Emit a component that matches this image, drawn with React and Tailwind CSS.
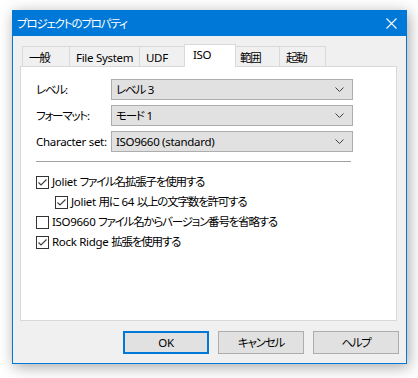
import React from 'react';

const font = { fontFamily: '"Noto Sans", "Noto Sans CJK JP", sans-serif' };

// Japanese runs get tighter tracking to approach Meiryo UI widths
function T({ children }) {
  const parts = String(children).split(/([\u3000-\u30ff\u4e00-\u9fff\uff00-\uffef]+)/);
  return (
    <>
      {parts.map((p, i) =>
        i % 2 === 1 ? (
          <span key={i} className="tracking-[-1.2px]">{p}</span>
        ) : (
          <span key={i}>{p}</span>
        )
      )}
    </>
  );
}

function Chevron() {
  return (
    <svg width="9" height="5" viewBox="0 0 9 5" className="shrink-0">
      <polyline points="0.5,0.5 4.5,4.5 8.5,0.5" fill="none" stroke="#404040" strokeWidth="1" />
    </svg>
  );
}

function Combo({ label, value }) {
  return (
    <div className="flex items-center h-[21px]">
      <div className="w-[75px] shrink-0"><T>{label}</T></div>
      <div className="w-[242px] h-[21px] flex items-center justify-between border border-[#adadad] bg-[#e1e1e1] pl-[4px] pr-[8px]">
        <span><T>{value}</T></span>
        <Chevron />
      </div>
    </div>
  );
}

function Check({ checked, label, indent }) {
  return (
    <div className={`flex items-center h-[20px] ${indent ? 'pl-[19px]' : ''}`}>
      <div className="w-[13px] h-[13px] border border-[#333333] bg-white flex items-center justify-center shrink-0">
        {checked && (
          <svg width="11" height="11" viewBox="0 0 11 11">
            <polyline points="1.5,5.5 4,8 9.5,2.5" fill="none" stroke="#404040" strokeWidth="1.2" />
          </svg>
        )}
      </div>
      <span className="ml-[3px]"><T>{label}</T></span>
    </div>
  );
}

const tabs = [
  { name: '一般', w: 'w-[48px]' },
  { name: 'File System', w: 'w-[71px]' },
  { name: 'UDF', w: 'w-[48px]' },
  { name: 'ISO', w: 'w-[52px]', active: true },
  { name: '範囲', w: 'w-[47px]' },
  { name: '起動', w: 'w-[47px]' },
];

export default function App() {
  return (
    <div className="w-[418px] h-[378px] bg-white pl-[12px] pt-[10px] text-[11.5px] tracking-[-0.3px] text-black whitespace-nowrap [font-feature-settings:'palt']" style={font}>
      <div className="w-[395px] h-[354px] border border-[#0078d7] bg-[#f0f0f0] flex flex-col shadow-[2px_3px_14px_rgba(0,0,0,0.35)]">
        {/* title bar */}
        <div className="h-[25px] bg-[#0078d7] flex items-center justify-between pl-[4px] pr-[9px] text-white">
          <span><T>プロジェクトのプロパティ</T></span>
          <svg width="11" height="11" viewBox="0 0 11 11">
            <path d="M0.5 0.5 L10.5 10.5 M10.5 0.5 L0.5 10.5" stroke="white" strokeWidth="1.1" />
          </svg>
        </div>

        {/* tabs */}
        <div className="flex items-end pl-[9px] mt-[8px] h-[22px] relative z-10">
          {tabs.map((t, i) =>
            t.active ? (
              <div key={t.name} className={`${t.w} h-[23px] -mx-[2px] -mb-[1px] bg-white border border-b-0 border-[#d9d9d9] pl-[8px] pt-[1px] relative z-10 ${i > 0 ? '-ml-[3px]' : ''}`}>
                <T>{t.name}</T>
              </div>
            ) : (
              <div key={t.name} className={`${t.w} h-[20px] border border-b-0 border-[#d9d9d9] pl-[6px] pt-[2px] ${i > 0 ? '-ml-[1px]' : ''}`}>
                <T>{t.name}</T>
              </div>
            )
          )}
        </div>

        {/* panel */}
        <div className="ml-[7px] w-[377px] h-[255px] bg-white border border-[#d9d9d9] pl-[15px] pt-[12px]">
          <div className="flex flex-col gap-[5px]">
            <Combo label="レベル:" value="レベル 3" />
            <Combo label="フォーマット:" value="モード 1" />
            <Combo label="Character set:" value="ISO9660 (standard)" />
          </div>
          <div className="w-[315px] h-px bg-[#a0a0a0] mt-[9px] mb-[10px]" />
          <div className="flex flex-col">
            <Check checked label="Joliet ファイル名拡張子を使用する" />
            <Check checked indent label="Joliet 用に 64 以上の文字数を許可する" />
            <Check label="ISO9660 ファイル名からバージョン番号を省略する" />
            <Check checked label="Rock Ridge 拡張を使用する" />
          </div>
        </div>

        {/* buttons */}
        <div className="flex justify-end gap-[9px] pr-[7px] mt-[10px]">
          <div className="w-[86px] h-[23px] border-2 border-[#0078d7] bg-[#e1e1e1] flex items-center justify-center">OK</div>
          <div className="w-[86px] h-[23px] border border-[#adadad] bg-[#e1e1e1] flex items-center justify-center"><T>キャンセル</T></div>
          <div className="w-[86px] h-[23px] border border-[#adadad] bg-[#e1e1e1] flex items-center justify-center"><T>ヘルプ</T></div>
        </div>
      </div>
    </div>
  );
}
